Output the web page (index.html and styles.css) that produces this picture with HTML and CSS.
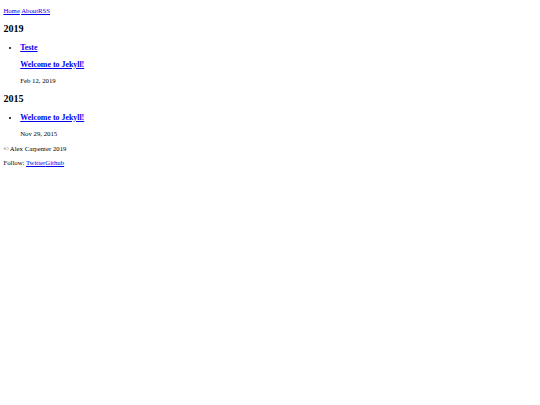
FILE: index.html
```html
<!DOCTYPE html>
<html class="page">
<head>
<meta charset="utf-8">
<title>Archive</title>
<link rel="stylesheet" href="styles.css">
</head>
<body class="site">
<p class="nav"><a class="link" href="#">Home</a> <a class="link" href="#">About</a><a class="link" href="#">RSS</a></p>
<h2 class="year">2019</h2>
<ul class="posts">
<li class="post">
<h3 class="post-title"><a class="link" href="#">Teste</a></h3>
<h3 class="post-title"><a class="link" href="#">Welcome to Jekyll!</a></h3>
<p class="post-date">Feb 12, 2019</p>
</li>
</ul>
<h2 class="year">2015</h2>
<ul class="posts">
<li class="post">
<h3 class="post-title"><a class="link" href="#">Welcome to Jekyll!</a></h3>
<p class="post-date">Nov 29, 2015</p>
</li>
</ul>
<p class="footer-line">© Alex Carpenter 2019</p>
<p class="footer-line">Follow: <a class="link" href="#">Twitter</a><a class="link" href="#">Github</a></p>
</body>
</html>
```
FILE: styles.css
```css
.page {
  background: #ffffff;
}
.site {
  margin: 3.375px;
  font-family: "Liberation Serif", "Times New Roman", serif;
  font-size: 6.75px;
  line-height: 7.76px;
  color: #000000;
}
.link {
  color: #0000ee;
  text-decoration: underline;
}
.year {
  font-size: 10.125px;
  line-height: 11.64px;
  font-weight: bold;
  margin: 8.4px 0;
}
.posts {
  margin: 6.75px 0;
  padding-left: 16.875px;
  list-style: disc;
}
.post-title {
  font-size: 7.9px;
  line-height: 9.08px;
  font-weight: bold;
  margin: 7.9px 0;
}
.post-date,
.footer-line {
  margin: 6.75px 0;
}
.nav {
  margin: 3.375px 0 6.75px;
}
```
